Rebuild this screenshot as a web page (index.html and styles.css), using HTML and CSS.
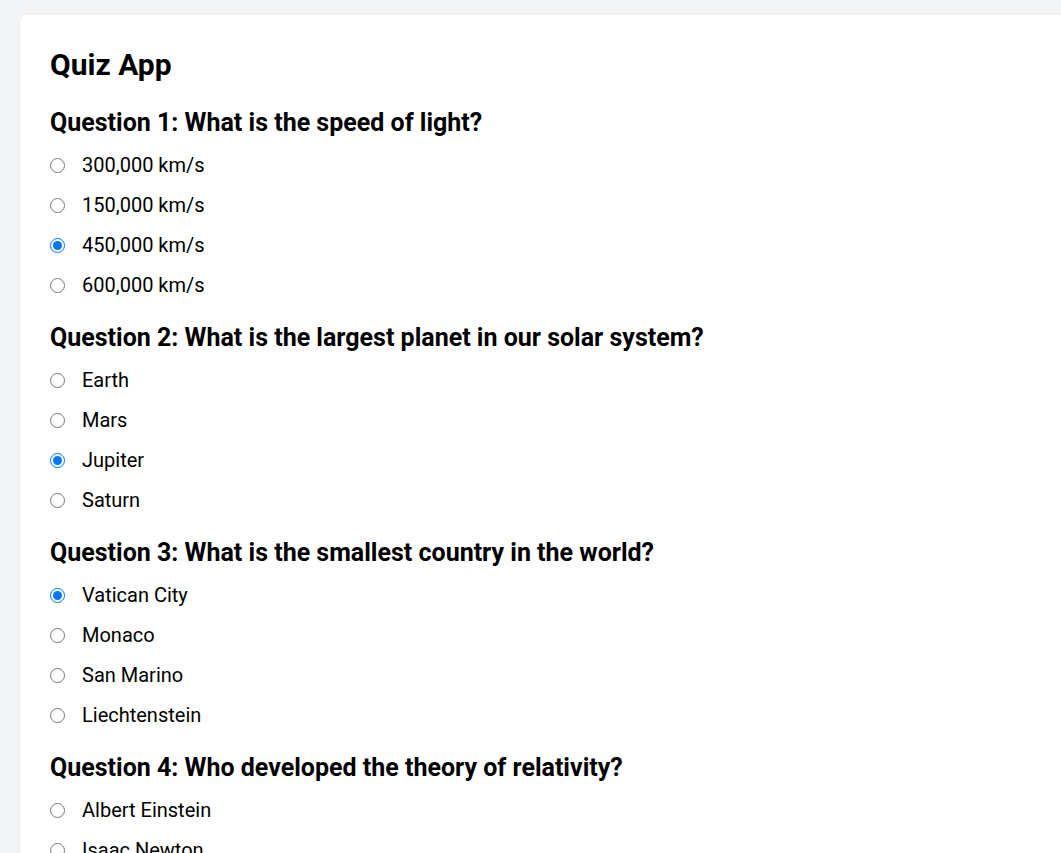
FILE: index.html
```html
<!DOCTYPE html>
<html>
<head>
<meta charset="utf-8">
<link rel="stylesheet" href="styles.css">
</head>
<body>
<div class="card">
  <h1 class="title">Quiz App</h1>
  <div class="question">
    <h2 class="q-title">Question 1: What is the speed of light?</h2>
    <label class="option"><input type="radio" name="q1"><span>300,000 km/s</span></label>
    <label class="option"><input type="radio" name="q1"><span>150,000 km/s</span></label>
    <label class="option"><input type="radio" name="q1" checked><span>450,000 km/s</span></label>
    <label class="option"><input type="radio" name="q1"><span>600,000 km/s</span></label>
  </div>
  <div class="question">
    <h2 class="q-title">Question 2: What is the largest planet in our solar system?</h2>
    <label class="option"><input type="radio" name="q2"><span>Earth</span></label>
    <label class="option"><input type="radio" name="q2"><span>Mars</span></label>
    <label class="option"><input type="radio" name="q2" checked><span>Jupiter</span></label>
    <label class="option"><input type="radio" name="q2"><span>Saturn</span></label>
  </div>
  <div class="question">
    <h2 class="q-title">Question 3: What is the smallest country in the world?</h2>
    <label class="option"><input type="radio" name="q3" checked><span>Vatican City</span></label>
    <label class="option"><input type="radio" name="q3"><span>Monaco</span></label>
    <label class="option"><input type="radio" name="q3"><span>San Marino</span></label>
    <label class="option"><input type="radio" name="q3"><span>Liechtenstein</span></label>
  </div>
  <div class="question">
    <h2 class="q-title">Question 4: Who developed the theory of relativity?</h2>
    <label class="option"><input type="radio" name="q4"><span>Albert Einstein</span></label>
    <label class="option"><input type="radio" name="q4"><span>Isaac Newton</span></label>
    <label class="option"><input type="radio" name="q4"><span>Galileo Galilei</span></label>
    <label class="option"><input type="radio" name="q4"><span>Nikola Tesla</span></label>
  </div>
</div>
</body>
</html>
```
FILE: styles.css
```css
html, body {
  margin: 0;
  padding: 0;
  background: #f3f4f6;
  overflow: hidden;
}
body {
  font-family: Roboto, "Liberation Sans", sans-serif;
  color: #000;
  padding: 15px 0 0 20px;
}
.card {
  width: 1100px;
  background: #fff;
  border-radius: 8px;
  box-shadow: 0 1px 3px rgba(0,0,0,0.06);
  padding: 32px 30px 30px 30px;
  box-sizing: border-box;
  min-height: 900px;
}
.title {
  font-size: 30px;
  font-weight: 700;
  margin: 0 0 25px 0;
  line-height: 36px;
}
.question {
  display: flex;
  flex-direction: column;
  margin-bottom: 18px;
}
.q-title {
  font-size: 25px;
  font-weight: 700;
  margin: 0 0 7px 0;
  line-height: 30px;
}
.option {
  display: flex;
  align-items: center;
  height: 40px;
  font-size: 20px;
}
.option input {
  margin: 0 17px 0 0;
  width: 15px;
  height: 15px;
}
```
